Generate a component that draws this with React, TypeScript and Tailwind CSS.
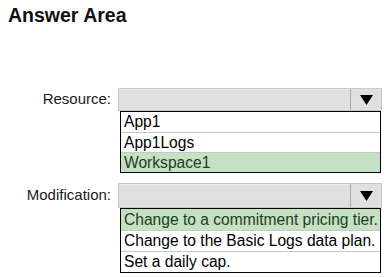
import React from "react";

type Option = { label: string; picked?: boolean };

const resources: Option[] = [
  { label: "App1" },
  { label: "App1Logs" },
  { label: "Workspace1", picked: true },
];

const modifications: Option[] = [
  { label: "Change to a commitment pricing tier.", picked: true },
  { label: "Change to the Basic Logs data plan." },
  { label: "Set a daily cap." },
];

const Arrow = () => (
  <svg width="13" height="10" viewBox="0 0 13 10">
    <polygon points="0,0 13,0 6.5,10" fill="#000" />
  </svg>
);

const DropBox = ({
  label,
  options,
  boxHeight,
  rowHeight,
}: {
  label: string;
  options: Option[];
  boxHeight: string;
  rowHeight: string;
}) => {
  return (
    <div className="flex">
      <div className={`w-[111px] shrink-0 flex items-center justify-end text-[15px] text-[#1a1a1a] ${boxHeight}`}>
        {label}
      </div>
      <div className="ml-[7px] w-[264px] flex flex-col">
        <div className={`flex border border-[#c8c8c8] bg-[#e0e0e0] ${boxHeight}`}>
          <div className="flex-1 border-t border-[#ececec]" />
          <div className="w-[31px] border-l border-[#a8a8a8] flex items-center justify-center">
            <Arrow />
          </div>
        </div>
        <div className="ml-[2px] mr-px border border-black bg-white flex flex-col">
          {options.map((o, i) => (
            <div
              key={o.label}
              className={`${rowHeight} flex items-center pl-[3px] text-[15.6px] leading-none whitespace-nowrap overflow-hidden ${
                i > 0 ? "border-t border-[#c8c8c8]" : ""
              } ${o.picked ? "bg-[#c5e0c3] text-[#1f3d1f]" : "text-black"}`}
            >
              {o.label}
            </div>
          ))}
        </div>
      </div>
    </div>
  );
};

export default function App() {
  return (
    <div
      className="w-[389px] h-[278px] bg-white overflow-hidden"
      style={{ fontFamily: '"Liberation Sans", Arial, sans-serif' }}
    >
      <h1 className="pt-[3px] pl-2 text-[19.5px] leading-6 font-bold text-[#111]">Answer Area</h1>
      <div className="mt-[61px]">
        <DropBox label="Resource:" options={resources} boxHeight="h-[23px]" rowHeight="h-[20px]" />
      </div>
      <div className="mt-[10px]">
        <DropBox label="Modification:" options={modifications} boxHeight="h-[25px]" rowHeight="h-[21px]" />
      </div>
    </div>
  );
}
